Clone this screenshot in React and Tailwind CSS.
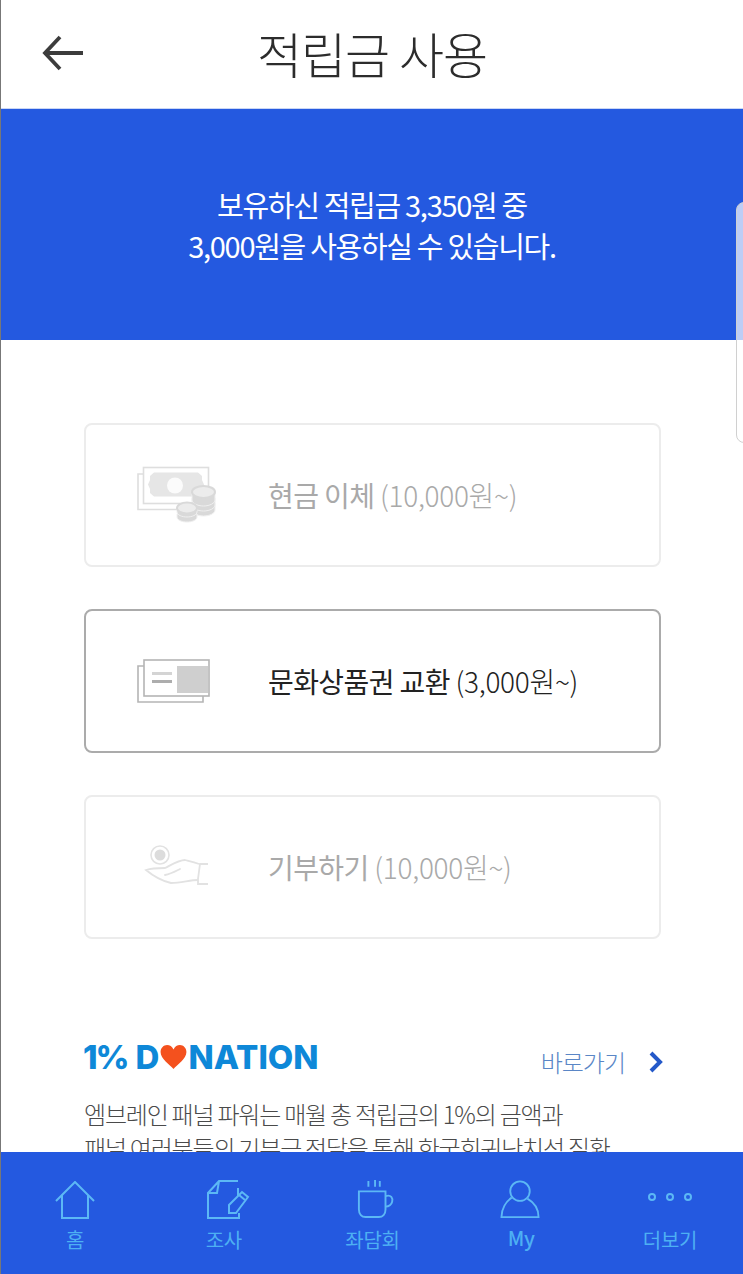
const font = { fontFamily: '"Noto Sans CJK KR", "Noto Sans", sans-serif' };

function CashIcon() {
  return (
    <svg width="82" height="60" viewBox="0 0 82 60" fill="none">
      <path d="M6 9H1V44.500H42" stroke="#dedede" strokeWidth="1.600" />
      <rect x="6.500" y="2.500" width="65" height="36" stroke="#dedede" strokeWidth="1.600" />
      <path d="M17 7.500H61L65 11V15L67 19.500L65 24V28L61 31.500H17L13 28V24L11 19.500L13 15V11Z" fill="#e6e6e6" />
      <circle cx="38" cy="20.500" r="8" fill="#fbfbfb" />
      <g fill="#d9d9d9" stroke="#f0f0f0" strokeWidth="1">
        <path d="M55 38H78V45C78 48 73 51 66.500 51C60 51 55 48 55 45Z" />
        <path d="M55 33H78V40C78 43 73 46 66.500 46C60 46 55 43 55 40Z" />
        <path d="M55 28H78V35C78 38 73 41 66.500 41C60 41 55 38 55 35Z" />
        <ellipse cx="66.500" cy="27" rx="11.500" ry="6" fill="#ececec" stroke="#d9d9d9" strokeWidth="2" />
        <path d="M40 49H60V52C60 55 55 57 50 57C45 57 40 55 40 52Z" />
        <path d="M40 44H60V47C60 50 55 52 50 52C45 52 40 50 40 47Z" />
        <ellipse cx="50" cy="43" rx="10" ry="5.500" fill="#ececec" stroke="#d9d9d9" strokeWidth="2" />
      </g>
    </svg>
  );
}

function VoucherIcon() {
  return (
    <svg width="74" height="46" viewBox="0 0 74 46" fill="none">
      <path d="M7 8H1V44H66V38" stroke="#b5b5b5" strokeWidth="1.600" />
      <rect x="7" y="2" width="65" height="36" fill="#fff" stroke="#b5b5b5" strokeWidth="1.600" />
      <rect x="12" y="8" width="59" height="27" fill="#cfcfcf" />
      <rect x="12" y="8" width="28" height="27" fill="#fff" />
      <rect x="15" y="14" width="20" height="3" fill="#d4d4d4" />
      <rect x="15" y="22" width="20" height="3" fill="#adadad" />
    </svg>
  );
}

function HandIcon() {
  return (
    <svg width="66" height="44" viewBox="0 0 66 44" fill="none">
      <circle cx="16" cy="10" r="9" stroke="#e2e2e2" strokeWidth="1.600" />
      <circle cx="16" cy="10" r="5.500" fill="#dcdcdc" />
      <path d="M64 19H56L54 34L54 39H64" stroke="#e2e2e2" strokeWidth="1.800" />
      <path d="M55 19C50 17 45 16 41 15C35 15 27 20 21 23C15 23 8 23 2 25C8 30 18 36 27 38C37 38 46 35 54 35" stroke="#e2e2e2" strokeWidth="1.800" />
      <path d="M21 30C27 29 32 26 36 24" stroke="#e2e2e2" strokeWidth="1.800" strokeLinecap="round" />
    </svg>
  );
}

function Card({ icon, label, price, active, iconClass }) {
  return (
    <div className={`flex items-center h-[144px] rounded-lg bg-white border-[2px] ${active ? "border-[#ababab]" : "border-[#ececec]"}`}>
      <div className={`w-[182px] shrink-0 flex ${iconClass}`}>{icon}</div>
      <div className={`text-[28px] tracking-[-0.6px] leading-none whitespace-nowrap ${active ? "text-[#222222]" : "text-[#a9a9a9]"}`}>
        {label} <span className="font-light tracking-[-0.3px]">{price}</span>
      </div>
    </div>
  );
}

function NavItem({ icon, label, labelClass, iconClass }) {
  return (
    <div className="flex flex-col items-center w-[80px]">
      <div className={`h-[67px] flex items-end justify-center ${iconClass || ""}`}>{icon}</div>
      <div className={`text-[20px] leading-none tracking-[-0.3px] text-[#4db0f3] ${labelClass || "mt-[11px]"}`}>{label}</div>
    </div>
  );
}

const s = { stroke: "#5cb8f5", strokeWidth: 2, fill: "none" };

export default function App() {
  return (
    <div className="relative w-[743px] h-[1274px] overflow-hidden bg-white border-l border-[#777777]" style={font}>
      <header className="relative h-[109px] flex items-center justify-center border-b border-[#c9d6f5] pb-[4px]">
        <svg className="absolute left-[40px] top-[34px]" width="44" height="38" viewBox="0 0 44 38" fill="none">
          <path d="M19 3L4 19L19 35M4 19H42" stroke="#3c3c3c" strokeWidth="3.800" />
        </svg>
        <h1 className="text-[49px] font-light text-[#2c2c2c] leading-none tracking-[-1px]">적립금 사용</h1>
      </header>

      <section className="h-[231px] bg-[#2459e0] flex flex-col items-center justify-center text-white text-[29px] leading-[41px] tracking-[-1.3px]">
        <p>보유하신 적립금 3,350원 중</p>
        <p>3,000원을 사용하실 수 있습니다.</p>
      </section>

      <div className="absolute right-[-19px] top-[202px] w-[26px] h-[241px] rounded-l-lg border border-[#d0d0d0] bg-white/70" />

      <main className="pl-[83px] pr-[82px] pt-[83px] flex flex-col gap-[42px]">
        <Card icon={<CashIcon />} iconClass="pl-[51px]" label="현금 이체" price="(10,000원~)" />
        <Card active icon={<VoucherIcon />} iconClass="pl-[51px]" label="문화상품권 교환" price="(3,000원~)" />
        <Card icon={<HandIcon />} iconClass="pl-[58px]" label="기부하기" price="(10,000원~)" />
      </main>

      <section className="px-[83px] pt-[99px]">
        <div className="flex items-center justify-between h-[34px]">
          <div className="flex items-center text-[#0e88d8] text-[33px] leading-none mt-[4px] ml-[-1px]" style={{ fontFamily: '"Inter", sans-serif', fontWeight: 800 }}>
            <span className="tracking-[-2px] mr-[8px]">1%</span>
            <span>D</span>
            <svg width="29" height="24" viewBox="0 0 30 26">
              <path d="M15 26C11 21 1 15 1 7.500C1 3 4.500 0 8 0C11 0 13.500 1.500 15 5C16.500 1.500 19 0 22 0C25.500 0 29 3 29 7.500C29 15 19 21 15 26Z" fill="#f4511e" />
            </svg>
            <span>NATION</span>
          </div>
          <div className="flex items-center mt-[14px]">
            <span className="text-[24px] font-light tracking-[-1px] text-[#5a86c6]">바로가기</span>
            <svg className="ml-[23px] mr-[-4px]" width="16" height="22" viewBox="0 0 16 22" fill="none">
              <path d="M3 2L12 11L3 20" stroke="#2459c9" strokeWidth="4" />
            </svg>
          </div>
        </div>
        <p className="text-[24px] leading-[34px] font-light tracking-[-1.2px] text-[#4a4a4a] mt-[25px] whitespace-nowrap">
          엠브레인 패널 파워는 매월 총 적립금의 1%의 금액과
          <br />
          패널 여러분들의 기부금 전달을 통해 한국희귀난치성 질환
        </p>
      </section>

      <nav className="absolute left-0 right-0 bottom-0 h-[122px] bg-[#2459e0] flex justify-between pl-[34px] pr-[33px]">
        <NavItem
          label="홈"
          icon={
            <svg width="40" height="38" viewBox="0 0 40 38" {...s}>
              <path d="M1 20L20 1L39 20M7 14V37H33V14" />
            </svg>
          }
        />
        <NavItem
          label="조사"
          iconClass="translate-x-[4px]"
          icon={
            <svg width="44" height="39" viewBox="0 0 44 39" {...s}>
              <path d="M32 1H13L2 13V38H33V33M2 13H11L13 1M32 8V16" />
              <path d="M23 33V25L36 12L42 17L30 33Z" />
              <path d="M33 15L39 20" />
            </svg>
          }
        />
        <NavItem
          label="좌담회"
          iconClass="translate-x-[3px]"
          icon={
            <svg width="38" height="40" viewBox="0 0 40 42" {...s}>
              <path d="M1 13H30V32C30 37 27 40 23 40H9C5 40 2 37 2 32V13" />
              <path d="M30 18C36 16 38 20 37 24C36 28 33 29 30 29" />
              <path d="M12 2V8M19 1V8M24 2V8" />
            </svg>
          }
        />
        <NavItem
          label="My"
          labelClass="font-medium mt-[9px]"
          iconClass="translate-x-[-1px]"
          icon={
            <svg width="42" height="39" viewBox="0 0 42 42" {...s}>
              <circle cx="21" cy="12" r="10.500" />
              <path d="M12 19C6 23 1 31 1 40H41C41 31 36 24 29 20" />
            </svg>
          }
        />
        <NavItem
          label="더보기"
          icon={
            <svg width="46" height="30" viewBox="0 0 46 30" {...s}>
              <circle cx="5" cy="8" r="3" />
              <circle cx="23" cy="8" r="3" />
              <circle cx="41" cy="8" r="3" />
            </svg>
          }
        />
      </nav>
    </div>
  );
}
